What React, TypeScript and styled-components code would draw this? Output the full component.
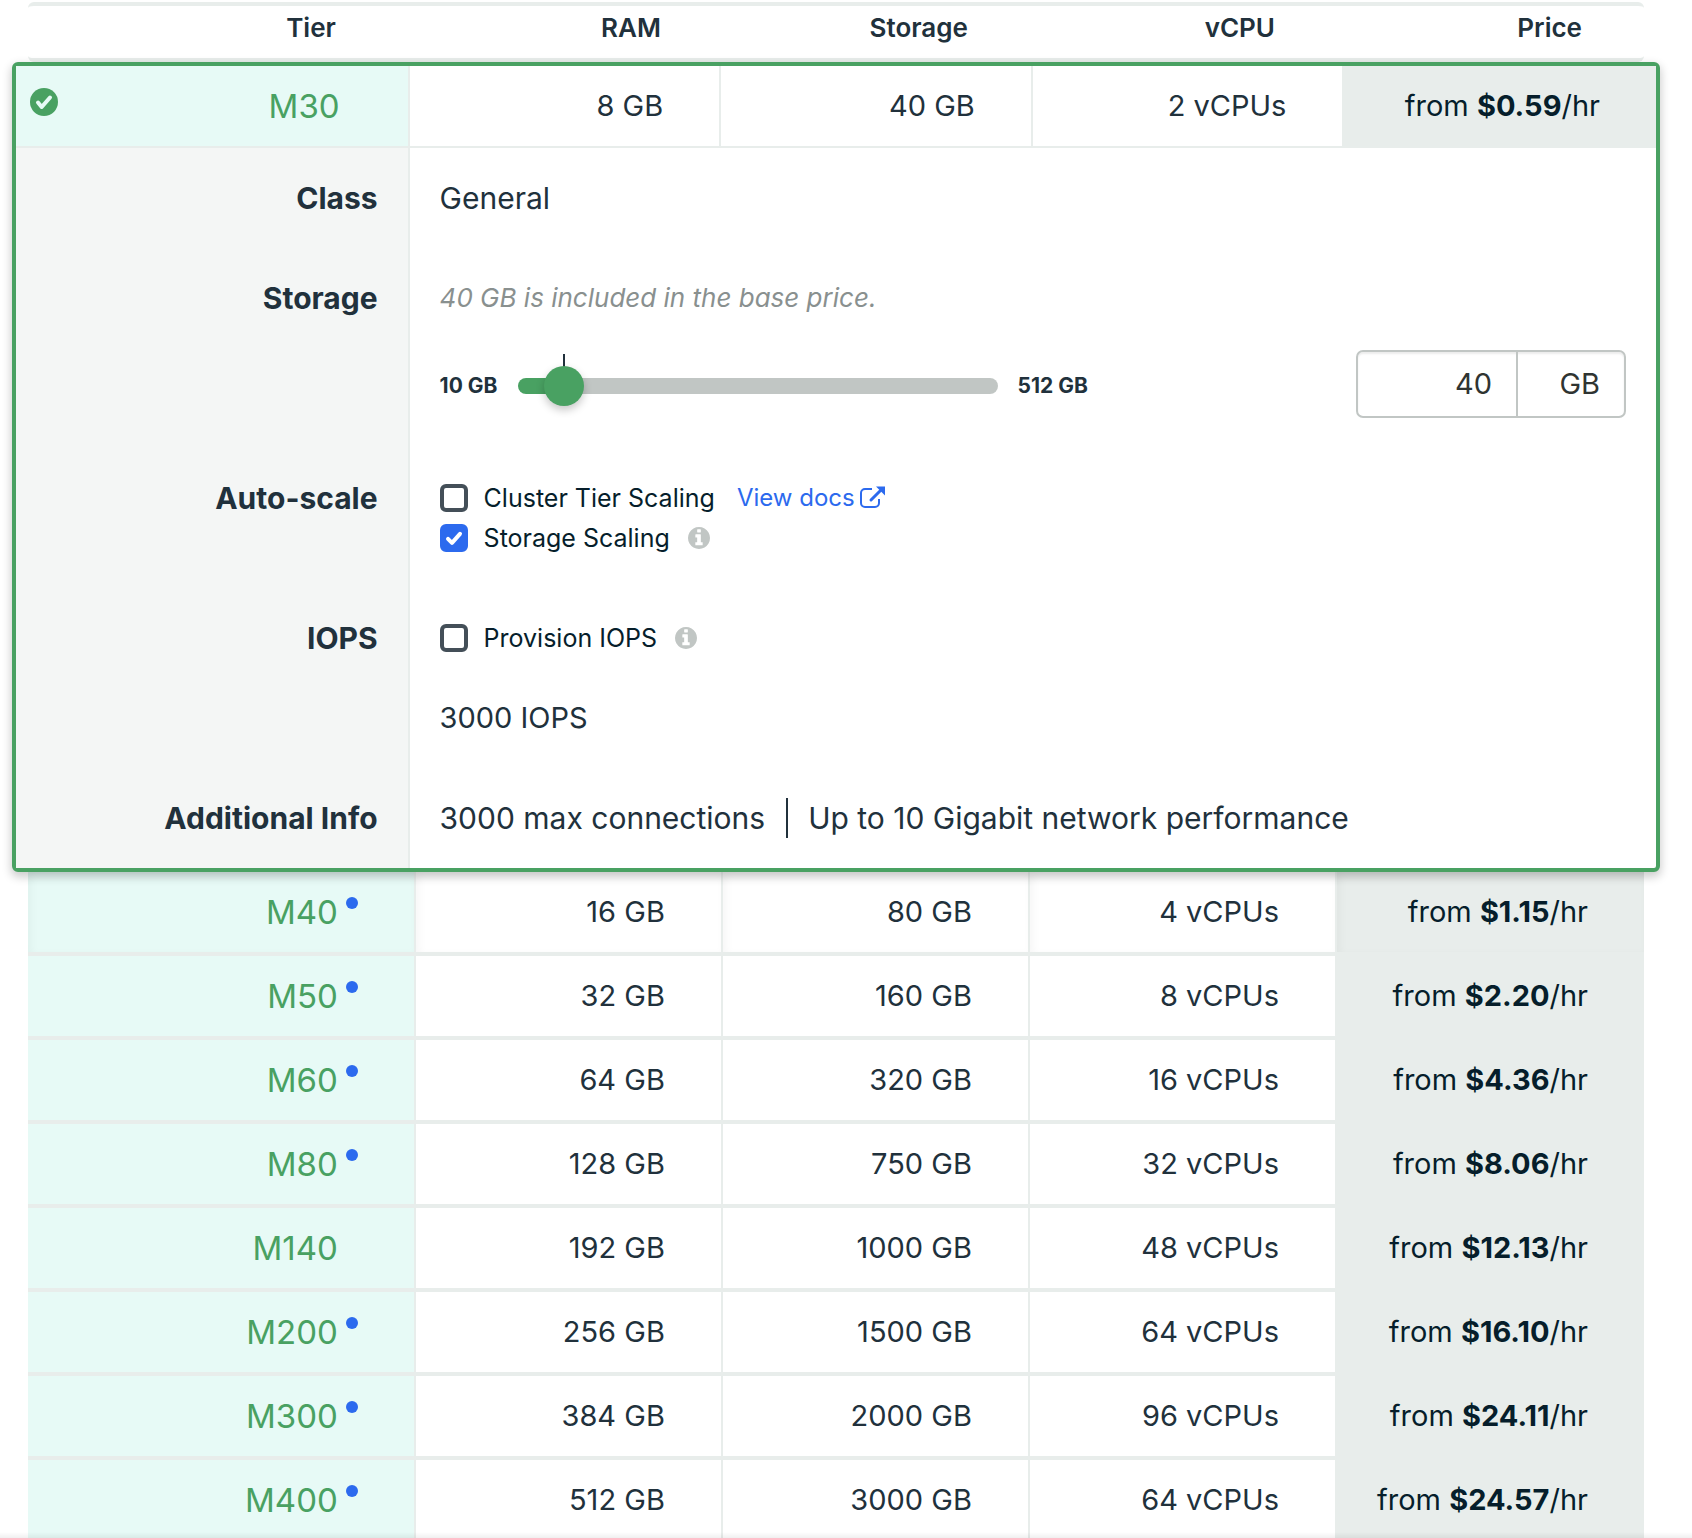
import { useState } from 'react';
import styled, { createGlobalStyle, css } from 'styled-components';

const color = {
  green: '#49a162',
  mint: '#e7faf6',
  line: '#e8edeb',
  panel: '#f4f6f5',
  text: '#21313c',
  dark: '#061e2b',
  blue: '#2c6aee',
  muted: '#89908f',
  gray: '#c1c6c4',
};

const GlobalStyle = createGlobalStyle`
  * { box-sizing: border-box; }
  body {
    margin: 0;
    background: #fff;
    color: ${color.text};
    font-family: Inter, 'Liberation Sans', sans-serif;
    font-size: 30px;
    line-height: 40px;
  }
`;

const Page = styled.main`
  height: 100vh;
  padding: 2px 48px 0 28px;
  overflow-y: auto;
  scrollbar-width: none;
`;

const BottomShade = styled.div`
  position: fixed;
  inset: auto 0 0 0;
  height: 6px;
  background: linear-gradient(rgba(0, 0, 0, 0), rgba(0, 0, 0, 0.06));
  pointer-events: none;
`;

const TierTable = styled.table`
  display: block;
  border-spacing: 0;
`;

const Head = styled.thead`
  display: block;
  border: 4px solid transparent;
  border-width: 4px 0;
  border-top-color: ${color.line};
  border-bottom-color: ${color.line};
  border-radius: 6px;
`;

const columns = css`
  display: grid;
  grid-template-columns: 24fr repeat(4, 19fr);
`;

const HeadRow = styled.tr`
  ${columns}
  height: 52px;
`;

const HeadCell = styled.th<{ $first?: boolean }>`
  padding: 0 ${(p) => (p.$first ? 80 : 62)}px 0 0;
  font-size: 26px;
  font-weight: 600;
  line-height: 44px;
  text-align: right;
`;

const Selected = styled.tbody`
  display: block;
  position: relative;
  margin: 0 -16px;
  border: 4px solid ${color.green};
  border-radius: 6px;
  background: #fff;
  box-shadow: 0 4px 10px 1px rgba(0, 0, 0, 0.2);
`;

const Rows = styled.tbody`
  display: block;
`;

const Row = styled.tr<{ $selected?: boolean }>`
  ${columns}
  border-bottom: ${(p) => (p.$selected ? 2 : 4)}px solid ${color.line};

  ${Rows} &:first-child > * {
    box-shadow: inset 3px 3px 8px rgba(0, 0, 0, 0.04);
  }
`;

const Cell = styled.td`
  padding: 20px 56px 20px 0;
  border-right: 2px solid ${color.line};
  font-size: 29px;
  text-align: right;
  white-space: nowrap;
`;

const PriceCell = styled(Cell)`
  border-right: 0;
  background: ${color.line};
  color: ${color.dark};
`;

const TierCell = styled.th<{ $selected?: boolean }>`
  display: flex;
  align-items: center;
  justify-content: flex-end;
  gap: 8px;
  padding: 0 ${(p) => (p.$selected ? 68 : 56)}px 0 14px;
  height: 80px;
  border-right: 2px solid ${color.line};
  background: ${color.mint};
  color: ${color.green};
  font-size: 33px;
  font-weight: 400;
`;

const SelectedMark = styled.svg`
  width: 28px;
  height: 28px;
  margin: 0 auto 8px 0;
`;

const Dot = styled.span<{ $on: boolean }>`
  width: 12px;
  height: 12px;
  margin-bottom: 18px;
  border-radius: 50%;
  background: ${(p) => (p.$on ? color.blue : 'transparent')};
`;

const DetailRow = styled.tr`
  display: grid;
  grid-template-columns: 24fr 76fr;
`;

const DetailLabel = styled.th`
  padding: 30px;
  border-right: 2px solid ${color.line};
  background: ${color.panel};
  font-weight: 700;
  text-align: right;
`;

const DetailBody = styled.td`
  display: flex;
  flex-direction: column;
  padding: 30px;
`;

const Included = styled.em`
  color: ${color.muted};
  font-size: 26px;
`;

const StorageControls = styled.div`
  display: flex;
  align-items: center;
  justify-content: space-between;
  margin-top: 32px;
`;

const SliderGroup = styled.div`
  display: flex;
  align-items: center;
  gap: 20px;
  padding-top: 4px;
`;

const Limit = styled.span`
  min-width: 58px;
  font-size: 21px;
  font-weight: 700;
  white-space: nowrap;
`;

const SliderBox = styled.div`
  position: relative;
  display: flex;
  width: 480px;
  height: 40px;
`;

const BaseTick = styled.span`
  position: absolute;
  top: -12px;
  left: 45px;
  width: 2px;
  height: 14px;
  background: ${color.text};
`;

const Slider = styled.input`
  position: relative;
  appearance: none;
  width: 100%;
  height: 40px;
  margin: 0;
  background: transparent;

  &::-webkit-slider-runnable-track {
    height: 16px;
    border-radius: 8px;
    background: linear-gradient(
      90deg,
      ${color.green} var(--fill),
      ${color.gray} var(--fill)
    );
  }

  &::-webkit-slider-thumb {
    appearance: none;
    width: 40px;
    height: 40px;
    margin-top: -12px;
    border-radius: 50%;
    background: ${color.green};
    box-shadow: 0 4px 8px rgba(0, 0, 0, 0.22);
  }
`;

const SizeField = styled.label`
  display: flex;
  width: 270px;
  height: 68px;
  border: 2px solid ${color.gray};
  border-radius: 7px;
  box-shadow: inset 0 2px 2px rgba(0, 0, 0, 0.08);
  color: #2f3432;
  font-size: 29px;
  overflow: hidden;
`;

const SizeInput = styled.input`
  flex: 1;
  min-width: 0;
  padding: 0 24px 0 0;
  border: 0;
  background: transparent;
  color: inherit;
  font: inherit;
  text-align: right;
`;

const Unit = styled.span`
  width: 108px;
  padding-right: 24px;
  border-left: 2px solid ${color.gray};
  line-height: 64px;
  text-align: right;
`;

const Option = styled.div`
  display: flex;
  align-items: center;
  height: 40px;
`;

const OptionLabel = styled.label`
  display: flex;
  align-items: center;
  gap: 16px;
  color: ${color.dark};
  font-size: 25px;
`;

const Checkbox = styled.input`
  appearance: none;
  width: 28px;
  height: 28px;
  margin: 0;
  border: 4px solid #444f58;
  border-radius: 6px;
  background: #fff;

  &:checked {
    border-color: ${color.blue};
    background: ${color.blue}
      url("data:image/svg+xml,%3Csvg xmlns='http://www.w3.org/2000/svg' viewBox='0 0 20 20'%3E%3Cpath d='M4 10.8l4 4 8-9' fill='none' stroke='white' stroke-width='4' stroke-linecap='round' stroke-linejoin='round'/%3E%3C/svg%3E")
      center / 20px no-repeat;
  }
`;

const DocsLink = styled.a`
  display: flex;
  align-items: center;
  gap: 5px;
  margin-left: 22px;
  color: ${color.blue};
  font-size: 24px;
  text-decoration: none;
`;

const InfoButton = styled.button`
  display: flex;
  margin-left: 18px;
  padding: 0;
  border: 0;
  background: none;
  color: ${color.gray};
`;

const Iops = styled.p`
  margin: 40px 0 0;
  font-size: 29px;
`;

const Facts = styled.div`
  display: flex;
  white-space: nowrap;
`;

const Fact = styled.span`
  & + & {
    margin-left: 21px;
    padding-left: 20px;
    border-left: 2px solid ${color.text};
  }
`;

function InfoIcon() {
  return (
    <svg width="22" height="22" viewBox="0 128 1536 1536" fill="currentColor" aria-hidden="true">
      <path d="M1024 1376v-160q0-14-9-23t-23-9h-96v-512q0-14-9-23t-23-9h-320q-14 0-23 9t-9 23v160q0 14 9 23t23 9h96v320h-96q-14 0-23 9t-9 23v160q0 14 9 23t23 9h448q14 0 23-9t9-23zm-128-896v-160q0-14-9-23t-23-9h-192q-14 0-23 9t-9 23v160q0 14 9 23t23 9h192q14 0 23-9t9-23zm640 416q0 209-103 385.5t-279.5 279.5-385.5 103-385.5-103-279.5-279.5-103-385.5 103-385.5 279.5-279.5 385.5-103 385.5 103 279.5 279.5 103 385.5z" />
    </svg>
  );
}

function ExternalIcon() {
  return (
    <svg width="25" height="24" viewBox="0 1 25 24" fill="none" stroke="currentColor" aria-hidden="true">
      <path d="M12 4H5a4 4 0 0 0-4 4v10a4 4 0 0 0 4 4h10a4 4 0 0 0 4-4v-4" strokeWidth="2" />
      <path d="M11 15 21 5" strokeWidth="3" strokeLinecap="round" />
      <path d="M16 1.500h9v9z" fill="currentColor" stroke="none" />
    </svg>
  );
}

type Tier = {
  name: string;
  ram: string;
  storage: string;
  cpu: string;
  price: string;
  dot: boolean;
};

const tiers: Tier[] = [
  { name: 'M40', ram: '16 GB', storage: '80 GB', cpu: '4 vCPUs', price: '$1.15', dot: true },
  { name: 'M50', ram: '32 GB', storage: '160 GB', cpu: '8 vCPUs', price: '$2.20', dot: true },
  { name: 'M60', ram: '64 GB', storage: '320 GB', cpu: '16 vCPUs', price: '$4.36', dot: true },
  { name: 'M80', ram: '128 GB', storage: '750 GB', cpu: '32 vCPUs', price: '$8.06', dot: true },
  { name: 'M140', ram: '192 GB', storage: '1000 GB', cpu: '48 vCPUs', price: '$12.13', dot: false },
  { name: 'M200', ram: '256 GB', storage: '1500 GB', cpu: '64 vCPUs', price: '$16.10', dot: true },
  { name: 'M300', ram: '384 GB', storage: '2000 GB', cpu: '96 vCPUs', price: '$24.11', dot: true },
  { name: 'M400', ram: '512 GB', storage: '3000 GB', cpu: '64 vCPUs', price: '$24.57', dot: true },
];

const MIN = 10;
const MAX = 512;

function StorageSize() {
  const [size, setSize] = useState(40);
  const fill = `${((size - MIN) / (MAX - MIN)) * 92 + 4}%`;
  const change = (value: string) => setSize(Number(value) || 0);
  return (
    <StorageControls>
      <SliderGroup>
        <Limit>{MIN} GB</Limit>
        <SliderBox>
          <BaseTick />
          <Slider
            type="range"
            aria-label="Storage size"
            min={MIN}
            max={MAX}
            value={size}
            onChange={(e) => change(e.target.value)}
            style={{ '--fill': fill } as React.CSSProperties}
          />
        </SliderBox>
        <Limit>{MAX} GB</Limit>
      </SliderGroup>
      <SizeField>
        <SizeInput
          type="text"
          inputMode="numeric"
          aria-label="Storage in gigabytes"
          value={size}
          onChange={(e) => change(e.target.value)}
        />
        <Unit>GB</Unit>
      </SizeField>
    </StorageControls>
  );
}

export default function App() {
  return (
    <Page>
      <GlobalStyle />
      <TierTable>
        <Head>
          <HeadRow>
            <HeadCell $first scope="col">Tier</HeadCell>
            <HeadCell scope="col">RAM</HeadCell>
            <HeadCell scope="col">Storage</HeadCell>
            <HeadCell scope="col">vCPU</HeadCell>
            <HeadCell scope="col">Price</HeadCell>
          </HeadRow>
        </Head>

        <Selected>
          <Row $selected>
            <TierCell $selected scope="row">
              <SelectedMark viewBox="0 0 28 28" aria-hidden="true">
                <circle cx="14" cy="14" r="14" fill={color.green} />
                <path d="M8 14.500l3.700 4.500L20 9.500" fill="none" stroke={color.mint} strokeWidth="4" strokeLinecap="round" strokeLinejoin="round" />
              </SelectedMark>
              M30
            </TierCell>
            <Cell>8 GB</Cell>
            <Cell>40 GB</Cell>
            <Cell>2 vCPUs</Cell>
            <PriceCell>
              from <b>$0.59</b>/hr
            </PriceCell>
          </Row>
          <DetailRow>
            <DetailLabel scope="row">Class</DetailLabel>
            <DetailBody>General</DetailBody>
          </DetailRow>
          <DetailRow>
            <DetailLabel scope="row">Storage</DetailLabel>
            <DetailBody>
              <Included>40 GB is included in the base price.</Included>
              <StorageSize />
            </DetailBody>
          </DetailRow>
          <DetailRow>
            <DetailLabel scope="row">Auto-scale</DetailLabel>
            <DetailBody>
              <Option>
                <OptionLabel>
                  <Checkbox type="checkbox" />
                  Cluster Tier Scaling
                </OptionLabel>
                <DocsLink href="#docs">
                  View docs
                  <ExternalIcon />
                </DocsLink>
              </Option>
              <Option>
                <OptionLabel>
                  <Checkbox type="checkbox" defaultChecked />
                  Storage Scaling
                </OptionLabel>
                <InfoButton type="button" aria-label="About storage scaling">
                  <InfoIcon />
                </InfoButton>
              </Option>
            </DetailBody>
          </DetailRow>
          <DetailRow>
            <DetailLabel scope="row">IOPS</DetailLabel>
            <DetailBody>
              <Option>
                <OptionLabel>
                  <Checkbox type="checkbox" />
                  Provision IOPS
                </OptionLabel>
                <InfoButton type="button" aria-label="About provisioned IOPS">
                  <InfoIcon />
                </InfoButton>
              </Option>
              <Iops>3000 IOPS</Iops>
            </DetailBody>
          </DetailRow>
          <DetailRow>
            <DetailLabel scope="row">Additional Info</DetailLabel>
            <DetailBody>
              <Facts>
                <Fact>3000 max connections</Fact>
                <Fact>Up to 10 Gigabit network performance</Fact>
              </Facts>
            </DetailBody>
          </DetailRow>
        </Selected>

        <Rows>
          {tiers.map((tier) => (
            <Row key={tier.name}>
              <TierCell scope="row">
                {tier.name}
                <Dot $on={tier.dot} />
              </TierCell>
              <Cell>{tier.ram}</Cell>
              <Cell>{tier.storage}</Cell>
              <Cell>{tier.cpu}</Cell>
              <PriceCell>
                from <b>{tier.price}</b>/hr
              </PriceCell>
            </Row>
          ))}
        </Rows>
      </TierTable>
      <BottomShade />
    </Page>
  );
}
